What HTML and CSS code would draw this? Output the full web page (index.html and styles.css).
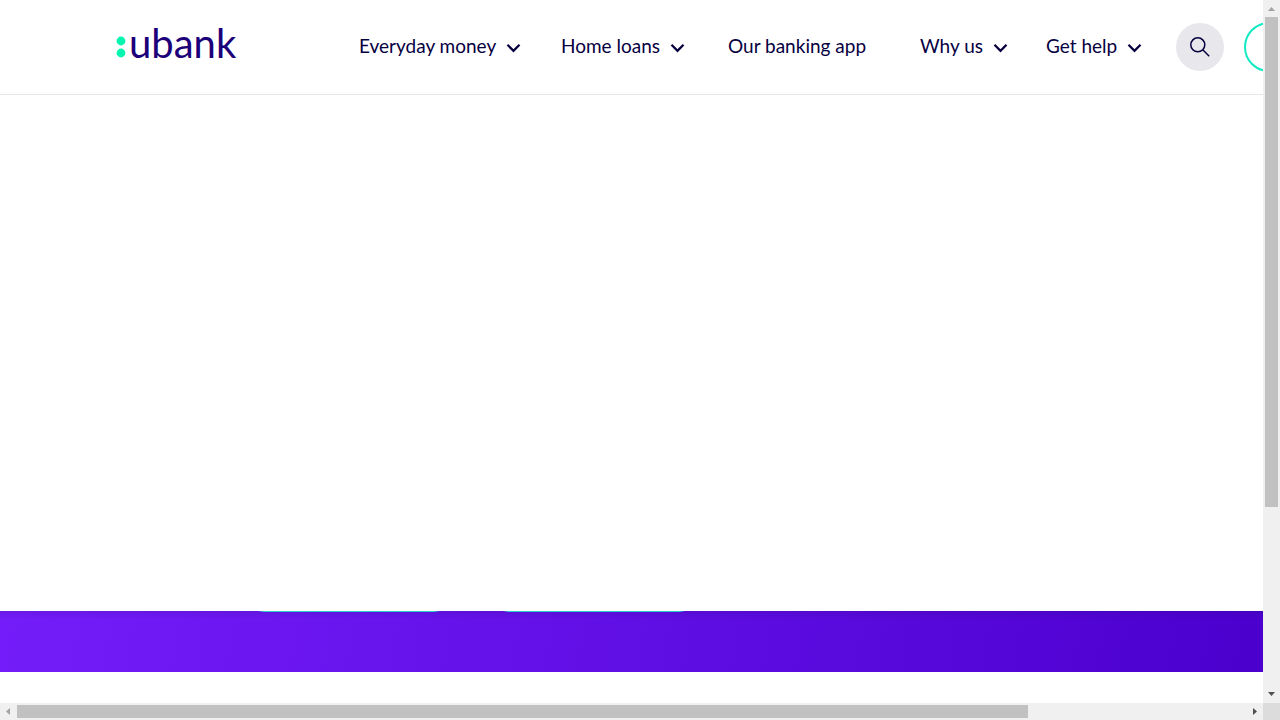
FILE: index.html
```html
<!DOCTYPE html>
<html lang="en">
<head>
<meta charset="utf-8">
<meta name="viewport" content="width=device-width, initial-scale=1">
<title>ubank</title>
<link rel="stylesheet" href="styles.css">
</head>
<body>
<div class="page">
  <header class="header">
    <a class="logo" href="#" aria-label="ubank">
      <svg class="logo-dots" width="10" height="22" viewBox="0 0 10 22" aria-hidden="true"><circle cx="5" cy="5" r="4.4"/><circle cx="5" cy="17" r="4.4"/></svg>
      <span class="logo-word">ubank</span>
    </a>
    <nav class="nav" aria-label="Main">
      <button class="nav-item" type="button">Everyday money <svg class="chevron" viewBox="0 0 15 10" aria-hidden="true"><path d="M1.5 1.8 7.5 7.8 13.5 1.8"/></svg></button>
      <button class="nav-item" type="button">Home loans <svg class="chevron" viewBox="0 0 15 10" aria-hidden="true"><path d="M1.5 1.8 7.5 7.8 13.5 1.8"/></svg></button>
      <a class="nav-item" href="#">Our banking app</a>
      <button class="nav-item" type="button">Why us <svg class="chevron" viewBox="0 0 15 10" aria-hidden="true"><path d="M1.5 1.8 7.5 7.8 13.5 1.8"/></svg></button>
      <button class="nav-item" type="button">Get help <svg class="chevron" viewBox="0 0 15 10" aria-hidden="true"><path d="M1.5 1.8 7.5 7.8 13.5 1.8"/></svg></button>
    </nav>
    <button class="search" type="button" aria-label="Search"><svg width="20" height="20" viewBox="0 0 20 20" aria-hidden="true"><circle cx="7.8" cy="7.8" r="7"/><path d="M12.8 12.8 19.2 19.2"/></svg></button>
    <button class="login" type="button" aria-label="Log in"></button>
  </header>
  <main class="main">
    <section class="hero"></section>
    <section class="band"><span class="edge"></span><span class="edge"></span></section>
    <section class="after"></section>
  </main>
</div>
<div class="bar bar-y" aria-hidden="true">
  <svg class="arrow arrow-off" viewBox="0 0 17 17"><path d="M5 11h7L8.500 7z"/></svg>
  <div class="track"><div class="thumb"></div></div>
  <svg class="arrow" viewBox="0 0 17 17"><path d="M5 6h7L8.500 10z"/></svg>
</div>
<div class="bar bar-x" aria-hidden="true">
  <svg class="arrow arrow-off" viewBox="0 0 17 17"><path d="M10 5v7L6 8.500z"/></svg>
  <div class="track"><div class="thumb"></div></div>
  <svg class="arrow" viewBox="0 0 17 17"><path d="M7 5v7L11 8.500z"/></svg>
</div>
<div class="corner"></div>
</body>
</html>
```

FILE: styles.css
```css
* {
  box-sizing: border-box;
}

body {
  margin: 0;
  height: 100vh;
  display: grid;
  grid-template: minmax(0, 1fr) 17px / minmax(0, 1fr) 17px;
  overflow: hidden;
  background: #fff;
  color: #06003f;
  font-family: Lato, "Open Sans", sans-serif;
}

button {
  font: inherit;
  color: inherit;
  border: 0;
  padding: 0;
  background: none;
  cursor: pointer;
}

a {
  color: inherit;
  text-decoration: none;
}

.page {
  display: flex;
  flex-direction: column;
  overflow: hidden;
}

.header {
  display: flex;
  flex: none;
  align-items: center;
  height: 95px;
  padding-left: 116px;
  border-bottom: 1px solid #e7e6eb;
  overflow: hidden;
}

.logo {
  display: flex;
  flex: none;
  align-items: center;
  gap: 3px;
  width: 243px;
  color: #1c0079;
}

.logo-dots {
  fill: #00f5b0;
}

.logo-word {
  font-size: 40px;
  line-height: 48px;
  margin-top: -8px;
}

.nav {
  display: grid;
  flex: none;
  grid-template-columns: 162px 127px 152px 86px 96px;
  column-gap: 40px;
  font-size: 19px;
  line-height: 24px;
}

.nav-item {
  display: flex;
  align-items: center;
  gap: 10px;
  padding-bottom: 3px;
  white-space: nowrap;
}

.chevron {
  width: 15px;
  height: 10px;
  flex: none;
  margin-top: 4px;
  fill: none;
  stroke: #06003f;
  stroke-width: 2.3;
}

.search {
  display: grid;
  flex: none;
  place-items: center;
  width: 48px;
  height: 48px;
  margin-left: 34px;
  border-radius: 50%;
  background: #e8e7ec;
}

.search svg {
  fill: none;
  stroke: #06003f;
  stroke-width: 1.5;
}

.login {
  flex: none;
  width: 120px;
  height: 50px;
  margin-left: 20px;
  border: 2px solid #13eac4;
  border-radius: 25px;
}

.main {
  display: flex;
  flex: 1;
  flex-direction: column;
}

.hero {
  flex: 1;
}

.band {
  display: flex;
  flex: none;
  gap: 63px;
  height: 61px;
  padding-left: 258px;
  background: linear-gradient(to bottom, rgba(30, 0, 90, 0.12), transparent 9px), linear-gradient(100deg, #741dfa, #4b00ce);
}

.edge {
  width: 182px;
  height: 1px;
  background: linear-gradient(to right, transparent, #2cd0cf 6px, #2cd0cf 176px, transparent);
}

.after {
  height: 31px;
}

.bar {
  display: flex;
  background: #f0f0f0;
}

.bar-y {
  flex-direction: column;
}

.track {
  flex: 1;
}

.bar-y .track {
  padding: 0 2px;
}

.bar-x .track {
  padding: 2px 0;
}

.thumb {
  background: #c1c1c1;
}

.bar-y .thumb {
  height: 73.3%;
}

.bar-x .thumb {
  width: 82.3%;
  height: 100%;
}

.arrow {
  flex: none;
  width: 17px;
  height: 17px;
  fill: #505050;
}

.arrow-off {
  fill: #a3a3a3;
}

.corner {
  background: #dcdcdc;
}
```
